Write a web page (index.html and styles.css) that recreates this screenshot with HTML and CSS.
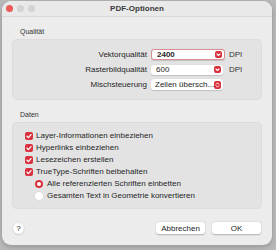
FILE: index.html
```html
<!DOCTYPE html>
<html lang="de">
<head>
  <meta charset="UTF-8">
  <title>PDF-Optionen</title>
  <link rel="stylesheet" href="styles.css">
</head>
<body>

<div class="window">

  <!-- TITLE BAR -->
  <div class="titlebar">
    <div class="lights">
      <span class="light red"></span>
      <span class="light"></span>
      <span class="light"></span>
    </div>
    <div class="title">PDF-Optionen</div>
    <div></div>
  </div>

  <div class="content">

    <!-- QUALITAET -->
    <div class="section-label">Qualität</div>
    <div class="group quality">
      <label class="row-label">Vektorqualität</label>
      <div class="field focus">
        <span>2400</span>
        <span class="arrow">
          <svg width="7" height="7" viewBox="0 0 7 7"><path d="M2 3 L3.5 4.5 L5 3" fill="none" stroke="#fff" stroke-width="1.1" stroke-linecap="round" stroke-linejoin="round"/></svg>
        </span>
      </div>
      <span class="unit">DPI</span>

      <label class="row-label">Rasterbildqualität</label>
      <div class="field">
        <span>600</span>
        <span class="arrow">
          <svg width="7" height="7" viewBox="0 0 7 7"><path d="M2 3 L3.5 4.5 L5 3" fill="none" stroke="#fff" stroke-width="1.1" stroke-linecap="round" stroke-linejoin="round"/></svg>
        </span>
      </div>
      <span class="unit">DPI</span>

      <label class="row-label">Mischsteuerung</label>
      <div class="field popup">
        <span class="value">Zeilen übersch...</span>
        <span class="arrow">
          <svg width="7" height="8" viewBox="0 0 7 8"><path d="M2.2 3.2 L3.5 1.9 L4.8 3.2 M2.2 4.8 L3.5 6.1 L4.8 4.8" fill="none" stroke="#fff" stroke-width="1" stroke-linecap="round" stroke-linejoin="round"/></svg>
        </span>
      </div>
      <span></span>
    </div>

    <!-- DATEN -->
    <div class="section-label">Daten</div>
    <div class="group data">
      <div class="check"><span class="box"><svg width="8" height="8" viewBox="0 0 8 8"><path d="M2 4.2 L3.4 5.6 L6 2.6" fill="none" stroke="#fff" stroke-width="1.3" stroke-linecap="round" stroke-linejoin="round"/></svg></span>Layer-Informationen einbeziehen</div>
      <div class="check"><span class="box"><svg width="8" height="8" viewBox="0 0 8 8"><path d="M2 4.2 L3.4 5.6 L6 2.6" fill="none" stroke="#fff" stroke-width="1.3" stroke-linecap="round" stroke-linejoin="round"/></svg></span>Hyperlinks einbeziehen</div>
      <div class="check"><span class="box"><svg width="8" height="8" viewBox="0 0 8 8"><path d="M2 4.2 L3.4 5.6 L6 2.6" fill="none" stroke="#fff" stroke-width="1.3" stroke-linecap="round" stroke-linejoin="round"/></svg></span>Lesezeichen erstellen</div>
      <div class="check"><span class="box"><svg width="8" height="8" viewBox="0 0 8 8"><path d="M2 4.2 L3.4 5.6 L6 2.6" fill="none" stroke="#fff" stroke-width="1.3" stroke-linecap="round" stroke-linejoin="round"/></svg></span>TrueType-Schriften beibehalten</div>
      <div class="radio"><span class="dot on"></span>Alle referenzierten Schriften einbetten</div>
      <div class="radio"><span class="dot"></span>Gesamten Text in Geometrie konvertieren</div>
    </div>

    <!-- FOOTER -->
    <div class="footer">
      <span class="help">?</span>
      <div class="buttons">
        <button class="btn">Abbrechen</button>
        <button class="btn">OK</button>
      </div>
    </div>

  </div>
</div>

</body>
</html>
```

FILE: styles.css
```css
body {
  margin: 0;
  background: #b9b9b9;
  font-family: "Liberation Sans", Arial, sans-serif;
  font-size: 8px;
  color: #262626;
  height: 250px;
  overflow: hidden;
}
.window {
  margin: 1px 0 0 2px;
  width: 270px;
  height: 244px;
  background: #ececec;
  border-radius: 9px;
  box-shadow: 0 0 0 0.5px #a8a8a8, 0 2px 5px rgba(0,0,0,0.2);
  display: flex;
  flex-direction: column;
  overflow: hidden;
}
.titlebar {
  height: 15px;
  display: grid;
  grid-template-columns: 1fr auto 1fr;
  align-items: center;
  border-bottom: 1px solid #d9d9d9;
  background: #e9e9e9;
}
.lights {
  display: flex;
  gap: 4px;
  padding-left: 4px;
}
.light {
  width: 7px;
  height: 7px;
  border-radius: 50%;
  background: #d3d3d3;
}
.light.red {
  background: #ec5b55;
}
.title {
  font-weight: bold;
  font-size: 8px;
  color: #3b3b3b;
}
.content {
  padding: 0 10px;
  flex: 1;
  display: flex;
  flex-direction: column;
}
.section-label {
  font-size: 7px;
  color: #333;
  padding: 11px 0 0 8px;
  height: 10px;
}
.group {
  background: #e3e3e3;
  border: 1px solid #dcdcdc;
  border-radius: 5px;
}
.quality {
  height: 61px;
  box-sizing: border-box;
  margin-top: 1px;
  padding-top: 8px;
  display: grid;
  grid-template-columns: 134px 74px auto;
  grid-auto-rows: 13px;
  row-gap: 2px;
  column-gap: 4px;
  align-items: center;
}
.row-label {
  text-align: right;
}
.field {
  height: 10px;
  background: #fff;
  border-radius: 3px;
  display: flex;
  align-items: center;
  justify-content: space-between;
  padding: 0 2px 0 5px;
  box-shadow: 0 0.5px 1px rgba(0,0,0,0.15);
  margin-right: 2px;
  white-space: nowrap;
}
.field.focus {
  height: 9px;
  margin: 0;
  border: 1.5px solid #d98d93;
  font-weight: bold;
}
.field.popup {
  padding-left: 4px;
  height: 11px;
}
.value {
  overflow: hidden;
}
.arrow {
  flex-shrink: 0;
  width: 7px;
  height: 7px;
  border-radius: 2px;
  background: #d9313d;
  display: flex;
  align-items: center;
  justify-content: center;
}
.popup .arrow {
  height: 8px;
}
.unit {
  color: #333;
}
.data {
  margin-top: 1px;
  height: 87px;
  box-sizing: border-box;
  padding: 8px 0 0 12px;
  display: flex;
  flex-direction: column;
  gap: 3px;
}
.check, .radio {
  height: 9px;
  display: flex;
  align-items: center;
  gap: 3px;
  white-space: nowrap;
}
.box {
  width: 8px;
  height: 8px;
  border-radius: 2px;
  background: #d9313d;
  display: flex;
}
.radio {
  padding-left: 10px;
  gap: 4px;
}
.dot {
  width: 8px;
  height: 8px;
  border-radius: 50%;
  background: #fff;
  box-shadow: 0 0 0 0.5px #d4d4d4;
  box-sizing: border-box;
}
.dot.on {
  background: #fff;
  border: 2.5px solid #d9313d;
  box-shadow: none;
}
.footer {
  flex: 1;
  display: flex;
  align-items: center;
  justify-content: space-between;
  padding: 2px 1px 0 1px;
}
.help {
  width: 11px;
  height: 11px;
  border-radius: 50%;
  background: #fff;
  box-shadow: 0 0.5px 1.5px rgba(0,0,0,0.25);
  font-size: 8px;
  display: flex;
  align-items: center;
  justify-content: center;
}
.buttons {
  display: flex;
  gap: 7px;
}
.btn {
  font-family: "Liberation Sans", Arial, sans-serif;
  font-size: 8px;
  color: #262626;
  width: 49px;
  height: 12px;
  padding: 0;
  border: none;
  border-radius: 3px;
  background: #fff;
  box-shadow: 0 0.5px 1.5px rgba(0,0,0,0.25);
}
```
